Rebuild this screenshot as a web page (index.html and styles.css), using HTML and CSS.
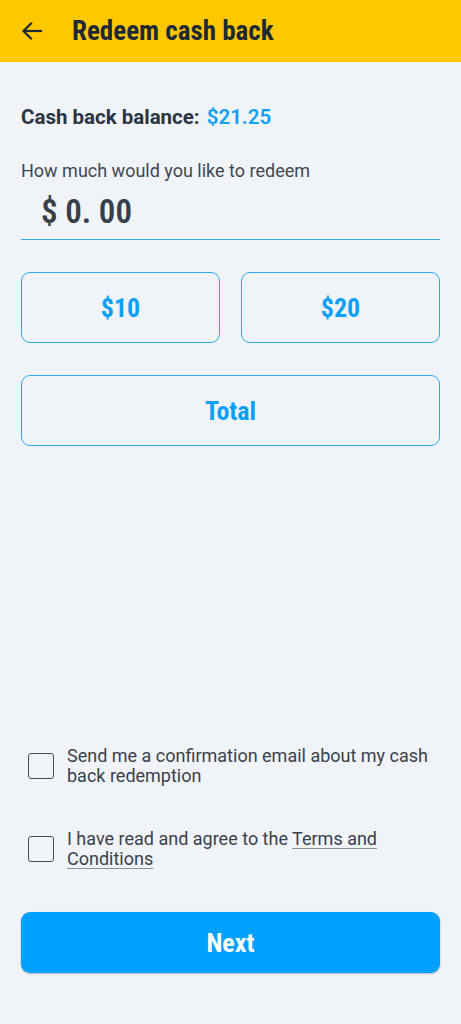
FILE: index.html
```html
<!DOCTYPE html>
<html lang="en">
<head>
  <meta charset="UTF-8" />
  <meta name="viewport" content="width=device-width, initial-scale=1" />
  <title>Redeem cash back</title>
  <link rel="stylesheet" href="styles.css">
</head>
<body>
  <header class="topbar">
    <button class="back" type="button" aria-label="Back">
      <svg width="24" height="24" viewBox="0 0 24 24" fill="none" stroke="#1f2933" stroke-width="2.2" stroke-linecap="square">
        <path d="M21 12H4" />
        <path d="M11 4.5L3.5 12L11 19.5" />
      </svg>
    </button>
    <h1>Redeem cash back</h1>
  </header>

  <main class="content">
    <p class="balance">Cash back balance: <span class="balance-value">$21.25</span></p>

    <label class="amount-label" for="amount">How much would you like to redeem</label>
    <div class="amount-field">
      <input type="text" id="amount" value="$ 0. 00" />
    </div>

    <div class="quick-row">
      <button type="button" class="outline-btn">$10</button>
      <button type="button" class="outline-btn">$20</button>
    </div>
    <button type="button" class="outline-btn total-btn">Total</button>

    <div class="spacer"></div>

    <label class="check">
      <input type="checkbox" />
      <span class="box"></span>
      <span class="check-text">Send me a confirmation email about my cash back redemption</span>
    </label>
    <label class="check">
      <input type="checkbox" />
      <span class="box"></span>
      <span class="check-text">I have read and agree to the <a href="#">Terms and Conditions</a></span>
    </label>

    <button type="button" class="next-btn">Next</button>
  </main>
</body>
</html>
```

FILE: styles.css
```css
* {
  box-sizing: border-box;
}
body {
  margin: 0;
  font-family: Roboto, 'Noto Sans', sans-serif;
  background: #f0f4f9;
  color: #2b3440;
  min-height: 1024px;
  display: flex;
  flex-direction: column;
}
.topbar {
  height: 62px;
  background: #ffc800;
  display: flex;
  align-items: center;
  padding: 0 20px;
  gap: 28px;
}
.back {
  background: none;
  border: none;
  padding: 0;
  width: 24px;
  height: 24px;
  display: flex;
}
.topbar h1 {
  margin: 0;
  font-size: 27px;
  font-weight: 700;
  font-stretch: condensed;
  color: #1f2933;
}
.content {
  flex: 1;
  display: flex;
  flex-direction: column;
  padding: 43px 21px 51px;
}
.balance {
  margin: 0;
  font-size: 20.5px;
  font-weight: 700;
  color: #2b3440;
  line-height: 24px;
}
.balance-value {
  color: #0ea0f5;
  margin-left: 2px;
  font-weight: 600;
}
.amount-label {
  margin-top: 31px;
  font-size: 18px;
  color: #40474f;
  line-height: 22px;
}
.amount-field {
  border-bottom: 1.5px solid #3aa9f0;
  margin-top: 7px;
  padding: 0 0 6px 20px;
}
.amount-field input {
  border: none;
  background: transparent;
  outline: none;
  padding: 0;
  width: 100%;
  height: 44px;
  font-family: Roboto, sans-serif;
  font-size: 33px;
  font-weight: 600;
  font-stretch: condensed;
  color: #374049;
}
.quick-row {
  display: grid;
  grid-template-columns: 1fr 1fr;
  gap: 21px;
  margin-top: 32px;
}
.outline-btn {
  height: 71px;
  border: 1.6px solid #2ea6f3;
  border-radius: 9px;
  background: transparent;
  color: #0aa0f5;
  font-family: Roboto, sans-serif;
  font-size: 26px;
  font-weight: 700;
  font-stretch: condensed;
}
.total-btn {
  margin-top: 32px;
  width: 100%;
}
.spacer {
  flex: 1;
}
.check {
  display: flex;
  align-items: flex-start;
  gap: 13px;
  padding-left: 7px;
  margin-bottom: 43px;
  cursor: pointer;
}
.check input {
  display: none;
}
.check .box {
  flex: 0 0 26px;
  height: 26px;
  border: 1.5px solid #454c56;
  border-radius: 3px;
  margin-top: 7px;
}
.check-text {
  font-size: 18px;
  line-height: 20px;
  color: #3a414a;
}
.check-text a {
  color: #3a414a;
  text-decoration: underline;
  text-decoration-color: #8a9099;
  text-underline-offset: 3px;
}
.next-btn {
  height: 61px;
  width: 100%;
  border: none;
  border-radius: 9px;
  background: #00a0ff;
  color: #fff;
  font-family: Roboto, sans-serif;
  font-size: 26px;
  font-weight: 700;
  font-stretch: condensed;
  box-shadow: 0 1px 2px rgba(0, 0, 0, 0.25);
}
```
